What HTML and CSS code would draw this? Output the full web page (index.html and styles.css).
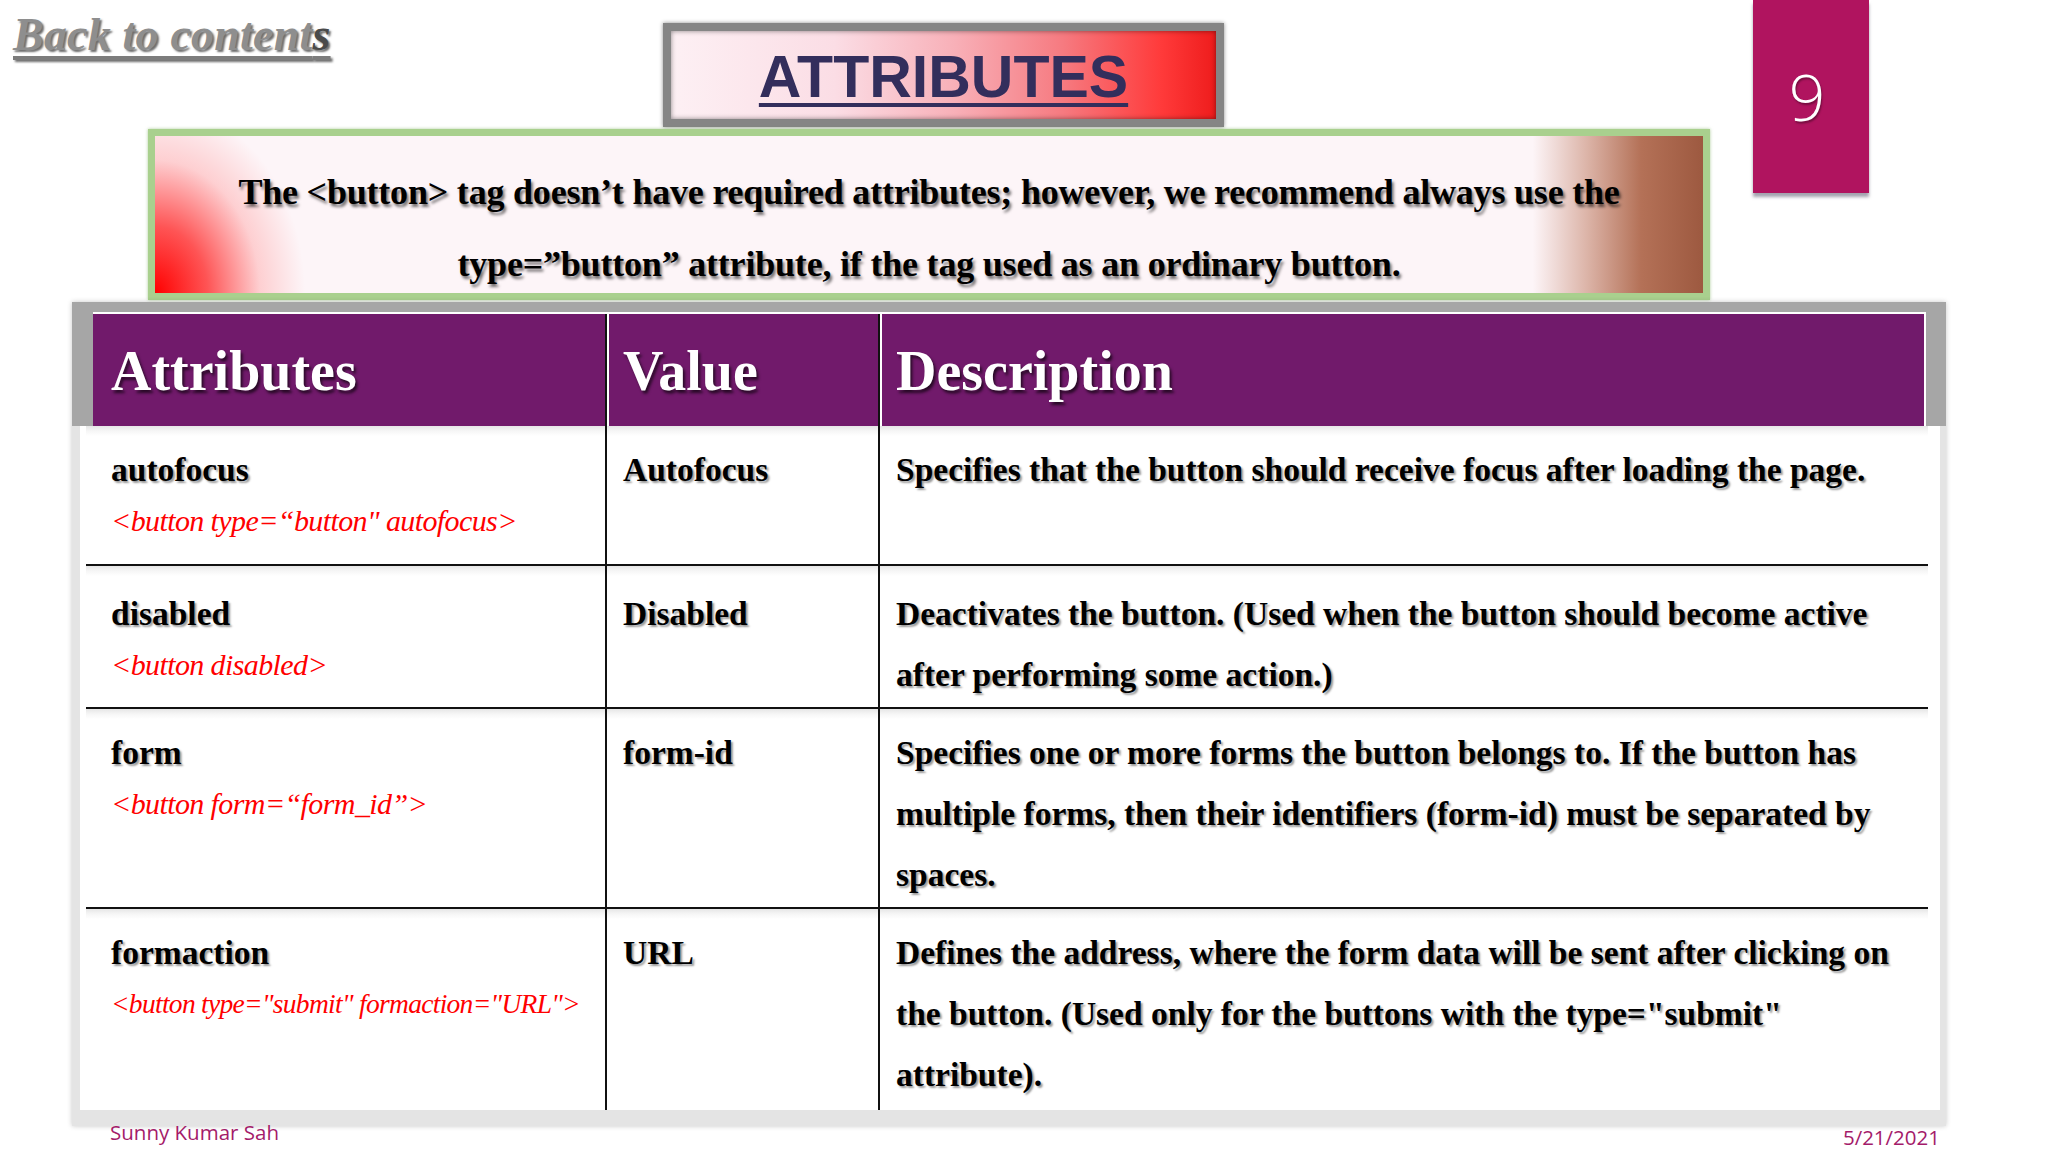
FILE: index.html
```html
<!DOCTYPE html>
<html lang="en">
<head>
<meta charset="utf-8">
<title>Attributes</title>
<link rel="stylesheet" href="styles.css">
</head>
<body>
<div class="slide">
  <div class="upper">
    <div class="upper-left">
      <div class="toprow">
        <div class="back"><a class="back-link">Back to content<span class="last">s</span></a></div>
        <div class="title-box"><h1 class="title">ATTRIBUTES</h1></div>
      </div>
      <div class="intro">
        <p class="intro-text">The &lt;button&gt; tag doesn’t have required attributes; however, we recommend always use the<br>type=”button” attribute, if the tag used as an ordinary button.</p>
      </div>
    </div>
    <div class="page-num">9</div>
  </div>

  <div class="frame">
    <div class="thead">
      <div class="th">Attributes</div>
      <div class="th">Value</div>
      <div class="th">Description</div>
    </div>
    <div class="tbody">
      <div class="row">
        <div class="cell c1"><div class="name">autofocus</div><div class="code">&lt;button type=“button" autofocus&gt;</div></div>
        <div class="cell c2">Autofocus</div>
        <div class="cell c3">Specifies that the button should receive focus after loading the page.</div>
      </div>
      <div class="row row-2">
        <div class="cell c1"><div class="name">disabled</div><div class="code">&lt;button disabled&gt;</div></div>
        <div class="cell c2">Disabled</div>
        <div class="cell c3">Deactivates the button. (Used when the button should become active<br>after performing some action.)</div>
      </div>
      <div class="row">
        <div class="cell c1"><div class="name">form</div><div class="code">&lt;button form=“form_id”&gt;</div></div>
        <div class="cell c2">form-id</div>
        <div class="cell c3">Specifies one or more forms the button belongs to. If the button has<br>multiple forms, then their identifiers (form-id) must be separated by<br>spaces.</div>
      </div>
      <div class="row row-last">
        <div class="cell c1"><div class="name">formaction</div><div class="code code-long">&lt;button type="submit" formaction="URL"&gt;</div></div>
        <div class="cell c2">URL</div>
        <div class="cell c3">Defines the address, where the form data will be sent after clicking on<br>the button. (Used only for the buttons with the type="submit"<br>attribute).</div>
      </div>
    </div>
  </div>

  <div class="footer">
    <span class="author">Sunny Kumar Sah</span>
    <span class="date">5/21/2021</span>
  </div>
</div>
</body>
</html>
```

FILE: styles.css
```css
html, body {
  margin: 0;
  padding: 0;
  background: #fff;
}

.slide {
  width: 2048px;
  height: 1152px;
  overflow: hidden;
  display: flex;
  flex-direction: column;
  font-family: "Liberation Serif", "Times New Roman", serif;
}

.upper {
  display: flex;
  height: 300px;
}

.upper-left {
  width: 1753px;
  display: flex;
  flex-direction: column;
}

.toprow {
  height: 129px;
  display: grid;
  grid-template-columns: 663px 561px;
}

.back {
  padding: 12px 0 0 13px;
}

.back-link {
  font: italic bold 46px/46px "Liberation Serif", serif;
  color: #8e8e8e;
  text-shadow: 2px 2px 2px rgba(60, 60, 60, 0.75);
  text-decoration: underline;
  text-decoration-color: #7c7c7c;
  text-decoration-thickness: 4px;
  text-underline-offset: 6px;
  letter-spacing: 0.2px;
}

.back-link .last {
  color: #4a4a4a;
}

.title-box {
  margin-top: 23px;
  height: 104px;
  box-sizing: border-box;
  border: 8px solid #858585;
  box-shadow: 0 0 4px rgba(0, 0, 0, 0.45), inset 0 0 5px rgba(0, 0, 0, 0.45);
  background: linear-gradient(90deg, #fdf0f4 0%, #fbdde5 30%, #f8b0b8 52%, #f67a80 72%, #ff3a3a 90%, #ee1c1c 100%);
  display: flex;
  align-items: center;
  justify-content: center;
}

.title {
  margin: 0;
  font: bold 59px/1 "Liberation Sans", Arial, sans-serif;
  color: #332e5c;
  text-decoration: underline;
  text-decoration-thickness: 4px;
  text-underline-offset: 6px;
  transform: translateY(2px);
}

.intro {
  margin-left: 148px;
  width: 1562px;
  height: 171px;
  box-sizing: border-box;
  border: 7px solid #a9d08e;
  box-shadow: 0 0 3px rgba(120, 170, 90, 0.6);
  background:
    radial-gradient(ellipse 150px 190px at 0% 100%, rgba(255, 0, 0, 1) 0%, rgba(255, 30, 30, 0.75) 35%, rgba(255, 120, 120, 0.3) 70%, rgba(255, 200, 210, 0) 100%),
    linear-gradient(90deg, #fdf5f8 0%, #fdf5f8 89%, #dcb4a8 92.5%, #b47157 96%, #9d5940 100%);
}

.intro-text {
  margin: 0;
  padding-top: 20px;
  text-align: center;
  font: bold 36px/72px "Liberation Serif", serif;
  letter-spacing: -0.2px;
  color: #000;
  text-shadow: 2px 3px 3px rgba(0, 0, 0, 0.55);
}

.page-num {
  width: 116px;
  height: 193px;
  background: #b0145f;
  box-shadow: 0 4px 3px rgba(90, 90, 110, 0.55);
  color: #fff;
  font: 300 64px/1 "Open Sans", "Noto Sans", sans-serif;
  display: flex;
  align-items: center;
  justify-content: center;
  padding-right: 8px;
  box-sizing: border-box;
  text-shadow: 1px 2px 2px rgba(0, 0, 0, 0.35);
}

.frame {
  margin: 2px 0 0 72px;
  width: 1874px;
  height: 824px;
  box-sizing: border-box;
  padding: 10px 6px 16px 8px;
  background: linear-gradient(#a6a6a6 0, #a6a6a6 124px, #e4e4e4 124px);
  box-shadow: 0 0 5px rgba(0, 0, 0, 0.22);
  display: flex;
  flex-direction: column;
}

.thead {
  margin: 0 14px 0 13px;
  height: 114px;
  box-sizing: border-box;
  border-top: 2px solid #fff;
  border-right: 2px solid #fff;
  background: #711a6b;
  display: grid;
  grid-template-columns: 512px 273px 1fr;
}

.th {
  color: #fff;
  font: bold 56px/114px "Liberation Serif", serif;
  padding-left: 18px;
  text-shadow: 2px 3px 3px rgba(0, 0, 0, 0.65);
}

.th + .th {
  border-left: 2px solid #111;
  box-shadow: inset 2px 0 #fff;
  padding-left: 16px;
}

.tbody {
  flex: 1;
  background: #fff;
  display: grid;
  grid-template-rows: 140px 143px 200px 1fr;
}

.row {
  margin: 0 12px 0 6px;
  display: grid;
  grid-template-columns: 519px 273px 1fr;
  border-bottom: 2px solid #111;
  background: linear-gradient(#e6e6e6 0, #f6f6f6 5px, #fff 10px);
}

.row-last {
  border-bottom: 0;
}

.cell {
  color: #000;
  font-weight: bold;
  font-size: 33.5px;
  text-shadow: 2px 2px 2px rgba(0, 0, 0, 0.4);
  min-width: 0;
}

.cell + .cell {
  border-left: 2px solid #111;
}

.c1 {
  padding: 18px 0 0 25px;
  line-height: 51px;
}

.c2 {
  padding: 18px 0 0 16px;
  line-height: 51px;
}

.c3 {
  padding: 13px 0 0 16px;
  line-height: 61px;
  white-space: nowrap;
}

.row-2 .c1,
.row-2 .c2 {
  padding-top: 22px;
}

.row-2 .c3 {
  padding-top: 17px;
}

.code {
  color: #f00;
  font: italic 30px/51px "Liberation Serif", serif;
  text-shadow: none;
  letter-spacing: -0.6px;
  white-space: nowrap;
}

.code-long {
  font-size: 27.5px;
  letter-spacing: -0.7px;
}

.footer {
  margin-top: -6px;
  display: flex;
  justify-content: space-between;
  align-items: flex-start;
  padding: 0 108px 0 110px;
  font: 20.5px/24px "Open Sans", "Noto Sans", sans-serif;
  color: #a41b6a;
}

.date {
  margin-top: 5px;
}
```
